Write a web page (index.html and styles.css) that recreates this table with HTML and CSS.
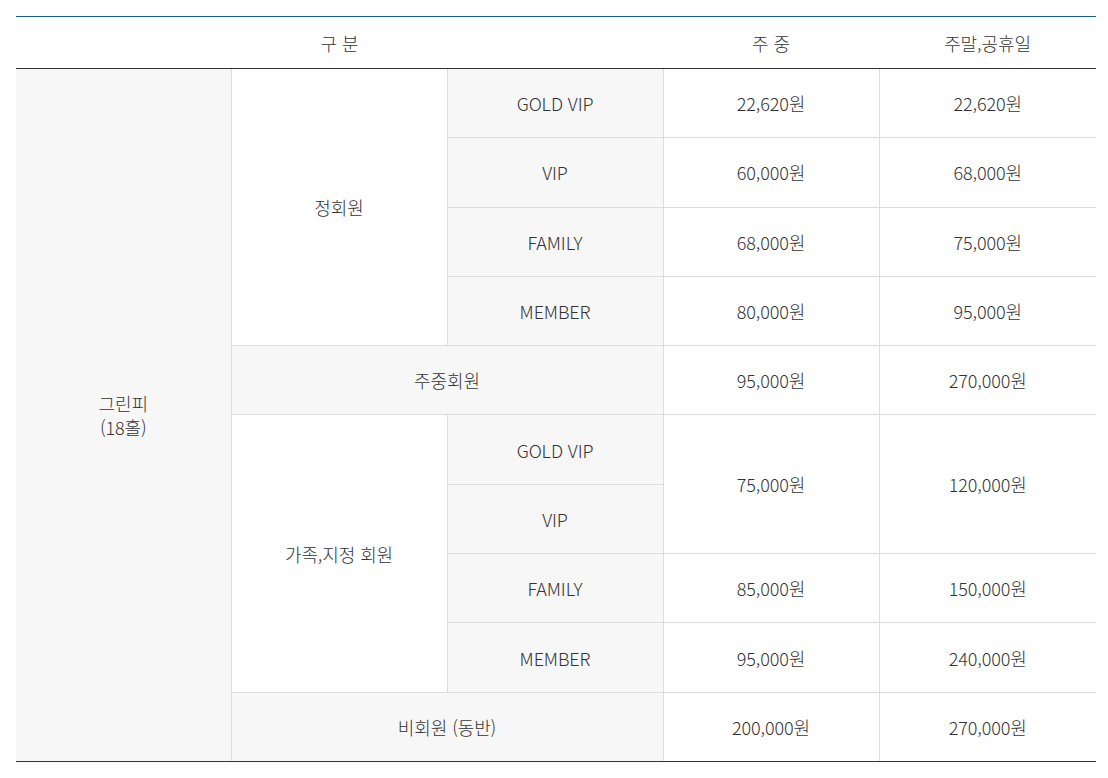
FILE: index.html
```html
<!DOCTYPE html>
<html lang="ko">
<head>
<meta charset="utf-8">
<link rel="stylesheet" href="styles.css">
</head>
<body>
<table class="fee">
  <colgroup>
    <col class="c1"><col class="c"><col class="c"><col class="c"><col class="c5">
  </colgroup>
  <thead>
    <tr>
      <th colspan="3">구 분</th>
      <th>주 중</th>
      <th>주말,공휴일</th>
    </tr>
  </thead>
  <tbody>
    <tr>
      <td rowspan="10" class="gray first last-row">그린피<br>(18홀)</td>
      <td rowspan="4">정회원</td>
      <td class="gray">GOLD VIP</td>
      <td>22,620원</td>
      <td class="end">22,620원</td>
    </tr>
    <tr>
      <td class="gray">VIP</td>
      <td>60,000원</td>
      <td class="end">68,000원</td>
    </tr>
    <tr>
      <td class="gray">FAMILY</td>
      <td>68,000원</td>
      <td class="end">75,000원</td>
    </tr>
    <tr>
      <td class="gray">MEMBER</td>
      <td>80,000원</td>
      <td class="end">95,000원</td>
    </tr>
    <tr>
      <td colspan="2" class="gray">주중회원</td>
      <td>95,000원</td>
      <td class="end">270,000원</td>
    </tr>
    <tr>
      <td rowspan="4">가족,지정 회원</td>
      <td class="gray">GOLD VIP</td>
      <td rowspan="2">75,000원</td>
      <td rowspan="2" class="end">120,000원</td>
    </tr>
    <tr>
      <td class="gray">VIP</td>
    </tr>
    <tr>
      <td class="gray">FAMILY</td>
      <td>85,000원</td>
      <td class="end">150,000원</td>
    </tr>
    <tr>
      <td class="gray">MEMBER</td>
      <td>95,000원</td>
      <td class="end">240,000원</td>
    </tr>
    <tr>
      <td colspan="2" class="gray last-row">비회원 (동반)</td>
      <td class="last-row">200,000원</td>
      <td class="end last-row">270,000원</td>
    </tr>
  </tbody>
</table>
</body>
</html>
```

FILE: styles.css
```css
html, body {
  margin: 0;
  padding: 0;
  background: #fff;
}
body {
  padding: 16px 12px 16px 16px;
  font-family: "Noto Sans CJK KR", "Noto Sans", sans-serif;
  font-weight: 300;
  font-size: 18px;
  color: #333;
  letter-spacing: -0.1px;
}
.fee {
  width: 1080px;
  border-collapse: collapse;
  table-layout: fixed;
  border-top: 1px solid #1a5f90;
}
.fee .c1 {
  width: 215px;
}
.fee .c {
  width: 216px;
}
.fee .c5 {
  width: 217px;
}
.fee th {
  height: 51px;
  padding: 0;
  font-weight: 300;
  text-align: center;
  vertical-align: middle;
  border-bottom: 1px solid #333;
  line-height: 24px;
}
.fee td {
  height: 68.3px;
  padding: 0;
  text-align: center;
  vertical-align: middle;
  border: 1px solid #ddd;
  line-height: 24px;
  background: #fff;
}
.fee td.first {
  border-left: 0;
}
.fee td.end {
  border-right: 0;
}
.fee td.gray {
  background: #f7f7f7;
}
.fee td.last-row {
  border-bottom: 1px solid #333;
}
```
